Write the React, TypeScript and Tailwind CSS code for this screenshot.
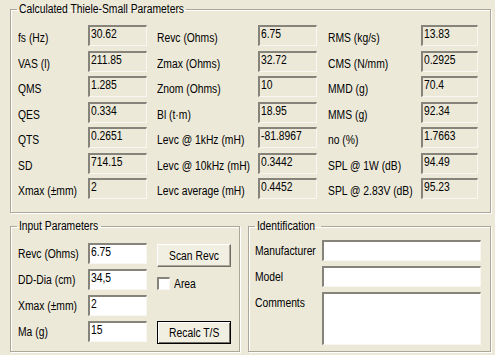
import React from "react";

const font = "font-['Liberation_Sans',Arial,sans-serif]";

// the dialog's font is narrower than Arial, so squeeze the text horizontally
const T = ({ children, center = false }: { children: React.ReactNode; center?: boolean }) => (
  <span
    className={`inline-block whitespace-nowrap scale-x-[0.86] ${center ? "origin-center" : "origin-left"}`}
  >
    {children}
  </span>
);

const sunken =
  "border-t-2 border-l-2 border-b border-r border-t-[#85837a] border-l-[#85837a] border-b-[#f8f7f2] border-r-[#f8f7f2]";

const Field = ({ value, w = "w-[59px]", white = false }: { value: string; w?: string; white?: boolean }) => (
  <div
    className={`${w} h-[21px] shrink-0 ${sunken} pl-[1px] leading-[15px] ${
      white ? "bg-white" : "bg-[#ECE9D8]"
    }`}
  >
    <T>{value}</T>
  </div>
);

const rows: [string, string, string, string, string, string][] = [
  ["fs (Hz)", "30.62", "Revc (Ohms)", "6.75", "RMS (kg/s)", "13.83"],
  ["VAS (l)", "211.85", "Zmax (Ohms)", "32.72", "CMS (N/mm)", "0.2925"],
  ["QMS", "1.285", "Znom (Ohms)", "10", "MMD (g)", "70.4"],
  ["QES", "0.334", "Bl (t·m)", "18.95", "MMS (g)", "92.34"],
  ["QTS", "0.2651", "Levc @ 1kHz (mH)", "-81.8967", "no (%)", "1.7663"],
  ["SD", "714.15", "Levc @ 10kHz (mH)", "0.3442", "SPL @ 1W (dB)", "94.49"],
  ["Xmax (±mm)", "2", "Levc average (mH)", "0.4452", "SPL @ 2.83V (dB)", "95.23"],
];

const groupCls =
  "border border-[#aca899] shadow-[inset_1px_1px_0_#ffffff,1px_1px_0_#ffffff] min-w-0";
const legendCls = "ml-[6px] px-[2px] leading-[14px]";

const Button = ({ label, isDefault = false }: { label: string; isDefault?: boolean }) => (
  <button
    className={`w-[74px] h-[23px] bg-[#F1EFE2] text-center ${
      isDefault
        ? "border border-black shadow-[inset_1px_1px_0_#ffffff,inset_-1px_-1px_0_#716f64]"
        : "border-t border-l border-b border-r border-t-white border-l-white border-b-[#716f64] border-r-[#716f64] shadow-[inset_-1px_-1px_0_#aca899]"
    }`}
  >
    <T center>{label}</T>
  </button>
);

export default function App() {
  return (
    <div className={`w-[495px] h-[355px] bg-[#ECE9D8] text-black text-[12px] ${font} overflow-hidden`}>
      {/* Calculated parameters */}
      <fieldset className={`${groupCls} mx-[10px] mt-[2px] w-[481px] h-[211px]`}>
        <legend className={`${legendCls} w-[169px]`}>
          <T>Calculated Thiele-Small Parameters</T>
        </legend>
        <div className="flex flex-col gap-[4.5px] pl-[7px] pt-[9px]">
          {rows.map((r) => (
            <div key={r[0]} className="flex h-[21px]">
              <div className="w-[70px] shrink-0 pt-[6px] leading-[14px]">
                <T>{r[0]}</T>
              </div>
              <Field value={r[1]} />
              <div className="w-[101px] ml-[10px] shrink-0 pt-[6px] leading-[14px]">
                <T>{r[2]}</T>
              </div>
              <Field value={r[3]} />
              <div className="w-[93px] ml-[11px] shrink-0 pt-[6px] leading-[14px]">
                <T>{r[4]}</T>
              </div>
              <Field value={r[5]} w="w-[57px]" />
            </div>
          ))}
        </div>
      </fieldset>

      <div className="flex mt-[6px] ml-[10px] gap-[8px]">
        {/* Input */}
        <fieldset className={`${groupCls} w-[230px] h-[133px]`}>
          <legend className={`${legendCls} w-[84px]`}>
            <T>Input Parameters</T>
          </legend>
          <div className="flex pl-[7px] pt-[10px]">
            <div className="flex flex-col gap-[5px]">
              {[
                ["Revc (Ohms)", "6.75"],
                ["DD-Dia (cm)", "34,5"],
                ["Xmax (±mm)", "2"],
                ["Ma (g)", "15"],
              ].map(([l, v]) => (
                <div key={l} className="flex h-[21px] items-center">
                  <div className="w-[70px] shrink-0 leading-[14px]">
                    <T>{l}</T>
                  </div>
                  <Field value={v} white />
                </div>
              ))}
            </div>
            <div className="flex flex-col ml-[10px]">
              <div className="mt-[1px]">
                <Button label="Scan Revc" />
              </div>
              <div className="flex items-center mt-[10px] h-[13px] gap-[4px]">
                <div className={`w-[13px] h-[13px] bg-white ${sunken}`} />
                <span className="leading-[14px]">
                  <T>Area</T>
                </span>
              </div>
              <div className="mt-[31px]">
                <Button label="Recalc T/S" isDefault />
              </div>
            </div>
          </div>
        </fieldset>

        {/* Identification */}
        <fieldset className={`${groupCls} w-[243px] h-[133px]`}>
          <legend className={`${legendCls} w-[66px]`}>
            <T>Identification</T>
          </legend>
          <div className="flex flex-col gap-[5px] pl-[6px] pt-[7px]">
            <div className="flex h-[21px] items-center">
              <div className="w-[67px] shrink-0 leading-[14px]">
                <T>Manufacturer</T>
              </div>
              <Field value="" w="w-[159px]" white />
            </div>
            <div className="flex h-[21px] items-center">
              <div className="w-[67px] shrink-0 leading-[14px]">
                <T>Model</T>
              </div>
              <Field value="" w="w-[159px]" white />
            </div>
            <div className="flex">
              <div className="w-[67px] shrink-0 pt-[4px] leading-[14px]">
                <T>Comments</T>
              </div>
              <div className={`w-[159px] h-[53px] bg-white ${sunken}`} />
            </div>
          </div>
        </fieldset>
      </div>
    </div>
  );
}
